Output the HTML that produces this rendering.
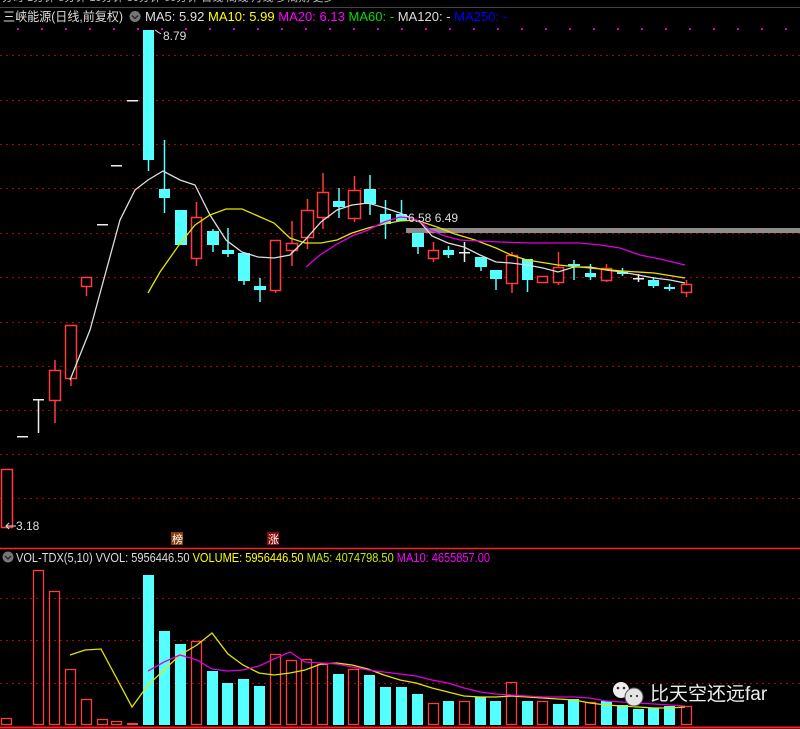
<!DOCTYPE html>
<html><head><meta charset="utf-8">
<style>
html,body{margin:0;padding:0;background:#000;width:800px;height:729px;overflow:hidden}
svg{display:block}
text{font-family:"Liberation Sans","Noto Sans CJK SC",sans-serif}
</style></head>
<body>
<svg id="s" width="800" height="729" viewBox="0 0 800 729" xmlns="http://www.w3.org/2000/svg">
<rect width="800" height="729" fill="#000"/>
<g id="grid"></g>
<rect x="406" y="228" width="394" height="5" fill="#8c8c8c"/>
<g id="c"></g>
<polyline fill="none" stroke="#ddd" stroke-width="1.3" points="70,380 90,330 105,275 120,220 135,190 148,180 163,171 180,180 195,185 210,215 226,240 242,252 258,257 274,258 290,255 305,240 321,222 337,210 352,205 368,203 385,208 400,213 420,222 432,236 448,243 464,247 480,255 496,262 511,263 527,265 543,268 558,272 574,267 590,267 606,270 622,272 638,275 654,278 670,280 685,283"/>
<polyline fill="none" stroke="#e5e500" stroke-width="1.3" points="148,293 160,272 179,245 195,225 210,215 226,209 242,209 258,216 274,223 290,238 305,243 321,243 337,240 352,233 368,228 384,224 400,221 416,220 437,227 455,234 475,240 496,248 511,255 527,260 558,265 590,268 622,271 654,273 685,278"/>
<polyline fill="none" stroke="#e000e0" stroke-width="1.3" points="306,267 320,255 337,244 352,236 368,230 384,222 400,217 410,218 420,221 430,230 445,236 460,240 480,241 500,242 530,243 560,243 580,243 600,245 620,248 640,255 660,259 685,265"/>
<g id="v"></g>
<polyline fill="none" stroke="#e5e500" stroke-width="1.3" points="70,655 85,650 101,649 132,707 148,685 164,670 180,655 197,645 212,633 228,654 243,665 259,673 274,675 290,673 305,670 321,664 337,663 352,665 368,669 384,675 400,680 416,683 432,688 448,692 464,696 480,697 496,697 511,696 527,697 543,698 558,699 574,700 590,703 606,705 622,706 638,707 654,708 670,708 685,707"/>
<polyline fill="none" stroke="#e000e0" stroke-width="1.3" points="148,671 164,662 180,655 197,660 212,669 228,671 243,670 259,666 274,659 290,652 305,662 321,663 337,664 352,667 368,670 384,672 400,674 416,676 432,680 448,683 464,688 480,692 496,694 511,695 527,696 543,697 558,697 574,697 590,698 606,701 622,702 638,703 654,704 670,705 685,706"/>
<line x1="0" y1="548.5" x2="800" y2="548.5" stroke="#ff2020" stroke-width="1.5"/>
<line x1="0" y1="727.5" x2="800" y2="727.5" stroke="#ff2020" stroke-width="2"/>
<line x1="0" y1="7.5" x2="800" y2="7.5" stroke="#444" stroke-width="1"/>
<text x="2" y="1" font-size="11" fill="#bbb">    分时   1分钟   5分钟   15分钟   30分钟   60分钟   日线   周线   月线   多周期   更多</text>
<text x="3" y="21" font-size="12.5" fill="#ddd" textLength="120" lengthAdjust="spacingAndGlyphs">三峡能源(日线,前复权)</text>
<circle cx="135" cy="16.5" r="5.5" fill="#777"/><path d="M132 15.5l3 3 3-3" stroke="#222" stroke-width="1.3" fill="none"/>
<text x="145" y="21" font-size="13" textLength="362" lengthAdjust="spacingAndGlyphs"><tspan fill="#ddd">MA5: 5.92 </tspan><tspan fill="#ffff00">MA10: 5.99 </tspan><tspan fill="#ff00ff">MA20: 6.13 </tspan><tspan fill="#00e000">MA60: - </tspan><tspan fill="#ddd">MA120: - </tspan><tspan fill="#0000ff">MA250: -</tspan></text>
<g id="md"></g>
<text x="163" y="40" font-size="12" fill="#ddd">8.79</text>
<path d="M155 30 l6 4" stroke="#ddd"/>
<text x="16" y="530" font-size="12" fill="#ddd">3.18</text>
<path d="M6 526h10M9 523l-3 3 3 3" stroke="#ddd" fill="none"/>
<text x="408" y="222" font-size="12" fill="#ddd">6.58    6.49</text>
<rect x="171" y="532" width="12" height="13" fill="#8b3a0a"/><text x="172" y="543" font-size="11" fill="#fff">榜</text>
<rect x="267" y="532" width="12" height="13" fill="#8b0a0a"/><text x="268" y="543" font-size="11" fill="#fff">涨</text>
<circle cx="8" cy="557" r="5.5" fill="#777"/><path d="M5 556l3 3 3-3" stroke="#222" stroke-width="1.3" fill="none"/>
<text x="16" y="562" font-size="13" textLength="474" lengthAdjust="spacingAndGlyphs"><tspan fill="#ddd">VOL-TDX(5,10) VVOL: 5956446.50  </tspan><tspan fill="#ffff00">VOLUME: 5956446.50 </tspan><tspan fill="#c8e800">MA5: 4074798.50 </tspan><tspan fill="#ff00ff">MA10: 4655857.00</tspan></text>
<circle cx="621" cy="690" r="8" fill="#eee"/><circle cx="634" cy="697" r="9" fill="#e4e4e4" stroke="#555"/>
<circle cx="618" cy="688" r="1.3" fill="#333"/><circle cx="624" cy="688" r="1.3" fill="#333"/>
<circle cx="631" cy="696" r="1.1" fill="#333"/><circle cx="637" cy="696" r="1.1" fill="#333"/>
<text x="650" y="700" font-size="19" fill="#eee">比天空还远far</text>
</svg>
<script>
var NS="http://www.w3.org/2000/svg";
function el(p,t,a){var e=document.createElementNS(NS,t);for(var k in a)e.setAttribute(k,a[k]);document.getElementById(p).appendChild(e);return e;}
[55,100,144,188,233,277,322,366,410,454,498].forEach(function(y){el("grid","line",{x1:0,x2:800,y1:y+.5,y2:y+.5,stroke:"#b00000","stroke-dasharray":"2,4"});});
[598,640,683].forEach(function(y){el("grid","line",{x1:0,x2:800,y1:y+.5,y2:y+.5,stroke:"#b00000","stroke-dasharray":"2,4"});});
for(var x=17;x<800;x+=24){el("md","rect",{x:x,y:28,width:2,height:2,fill:"#e000e0"});}
var R="#ff3b3b",C="#54ffff",W="#eee";
var cs=[[1,12,469,527,469,527,"r"],[17,27,436,437,436,437,"w"],[33,43,399,400,399,433,"w"],[49,60,370,400,360,423,"r"],[65,76,325,378,325,386,"r"],[81,91,277,286,277,296,"r"],[97,107,224,225,224,225,"w"],[111,121,165,166,165,166,"w"],[127,137,100,101,100,101,"w"],[143,153,30,160,30,171,"c"],[159,169,189,198,140,213,"c"],[175,186,210,245,210,245,"c"],[191,201,217,258,202,266,"r"],[207,218,231,245,229,252,"c"],[222,233,250,254,228,257,"c"],[238,249,253,281,253,285,"c"],[254,265,286,290,278,302,"c"],[270,280,240,290,240,293,"r"],[286,297,243,250,221,266,"r"],[301,313,210,237,199,249,"r"],[317,328,192,217,173,229,"r"],[333,344,201,207,188,218,"c"],[348,360,190,218,176,222,"r"],[364,375,189,204,175,215,"c"],[380,390,214,224,200,239,"c"],[396,406,214,221,200,221,"c"],[412,423,233,247,233,254,"c"],[428,438,250,258,242,262,"r"],[443,453,250,255,246,258,"c"],[459,469,252,253,242,262,"w"],[475,486,257,267,257,271,"c"],[490,501,270,279,270,290,"c"],[506,517,255,283,252,293,"r"],[522,532,259,280,259,292,"c"],[537,547,276,282,276,282,"r"],[553,563,267,282,252,285,"r"],[568,579,264,266,260,280,"c"],[585,595,273,277,264,280,"c"],[601,611,268,280,264,282,"r"],[617,627,272,274,268,276,"c"],[633,643,278,279,274,282,"w"],[648,658,280,286,277,288,"c"],[664,674,287,289,284,291,"c"],[681,691,284,292,280,297,"r"]];
cs.forEach(function(d){var cx=(d[0]+d[1])/2+.5,col=d[6]=="r"?R:d[6]=="c"?C:W;
 el("c","line",{x1:cx,x2:cx,y1:d[4],y2:d[5],stroke:col,"stroke-width":1.5});
 if(d[6]=="r")el("c","rect",{x:d[0]+.5,y:d[2]+.5,width:d[1]-d[0],height:d[3]-d[2],fill:"#000",stroke:R,"stroke-width":1.5});
 else if(d[6]=="c")el("c","rect",{x:d[0],y:d[2],width:d[1]-d[0]+1,height:Math.max(2,d[3]-d[2]),fill:C});
 else el("c","rect",{x:d[0],y:d[2],width:d[1]-d[0]+1,height:1.5,fill:W});
});
var vt=[718,724,570,591,669,699,719,721,723,575,631,644,641,671,683,679,686,654,660,659,664,674,669,675,687,687,694,703,701,701,697,701,682,701,701,704,699,702,701,705,709,708,706,706];
var vty=["r","r","r","r","r","r","r","r","f","c","c","c","r","c","c","c","c","r","r","r","r","c","r","c","c","c","c","r","c","r","c","c","r","c","r","c","c","r","c","c","c","c","c","r"];
vt.forEach(function(t,i){var x=cs[i][0];var h=725-t;
 if(vty[i]=="c")el("v","rect",{x:x,y:t,width:11,height:h,fill:C});
 else if(vty[i]=="f")el("v","rect",{x:x,y:t,width:11,height:h,fill:R});
 else el("v","rect",{x:x+.5,y:t+.5,width:10,height:h-1,fill:"none",stroke:R,"stroke-width":1.3});
});
</script>
</body></html>
